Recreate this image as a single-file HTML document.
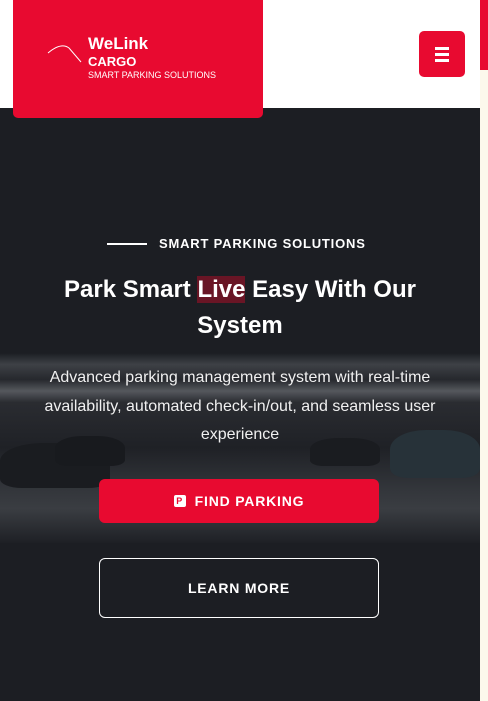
<!DOCTYPE html>
<html><head><meta charset="utf-8"><style>
*{margin:0;padding:0;box-sizing:border-box}
body{width:488px;height:701px;overflow:hidden;background:#fcf8ec;font-family:"Liberation Sans",sans-serif;position:relative}
.hero{position:absolute;left:0;top:108px;width:480px;height:593px;background:#1c1e23;overflow:hidden}
.img{position:absolute;left:0;top:245px;width:480px;height:190px;background:
linear-gradient(180deg,rgba(28,30,35,0) 0%,#3e4146 6%,#26282d 14%,#55585d 20%,#2a2c31 26%,#1f2126 50%,#33363b 72%,#3a3d42 82%,#1e2025 100%)}
.car{position:absolute;background:#111317;border-radius:40% 40% 20% 20%}
.header{position:absolute;left:0;top:0;width:480px;height:108px;background:#fff}
.strip{position:absolute;left:480px;top:0;width:8px;height:70px;background:#e80a30}
.logo{position:absolute;left:13px;top:0;width:250px;height:118px;background:#e80a30;border-radius:0 0 5px 5px;color:#fff}
.menu{position:absolute;left:419px;top:31px;width:46px;height:46px;background:#e80a30;border-radius:5px}
.menu i{position:absolute;left:16px;width:14px;height:3px;background:#fff}
.c{position:absolute;left:0;width:480px;text-align:center;color:#fff}
.btn{position:absolute;left:99px;width:280px;border-radius:6px;color:#fff;font-weight:bold;font-size:14px;letter-spacing:.8px;display:flex;align-items:center;justify-content:center}
</style></head><body>
<div class="strip"></div>
<div class="hero">
 <div class="img"></div>
 <div class="car" style="left:0;top:335px;width:110px;height:45px;background:#1a1c20"></div>
 <div class="car" style="left:55px;top:328px;width:70px;height:30px;background:#181a1e"></div>
 <div class="car" style="left:390px;top:322px;width:90px;height:48px;background:#273239"></div>
 <div class="car" style="left:310px;top:330px;width:70px;height:28px;background:#1a1c20"></div>
</div>
<div class="header"></div>
<div class="logo">
 <svg style="position:absolute;left:34px;top:44px" width="36" height="20"><path d="M1 9 Q14 -2 22 4 L34 18" stroke="#fff" stroke-width="1" fill="none"/></svg>
 <div style="position:absolute;left:75px;top:34px;font-size:17px;font-weight:bold">WeLink</div>
 <div style="position:absolute;left:75px;top:54px;font-size:13px;font-weight:bold">CARGO</div>
 <div style="position:absolute;left:75px;top:70px;font-size:9px">SMART PARKING SOLUTIONS</div>
</div>
<div class="menu"><i style="top:16px"></i><i style="top:22px"></i><i style="top:28px"></i></div>
<div style="position:absolute;left:107px;top:243px;width:40px;height:2px;background:#fff"></div>
<div style="position:absolute;left:159px;top:236px;color:#fff;font-size:13px;font-weight:bold;letter-spacing:.8px">SMART PARKING SOLUTIONS</div>
<div class="c" style="top:272px;font-size:24px;font-weight:bold;line-height:36px;padding:0 40px">Park Smart <span style="background:rgba(200,10,40,.45)">Live</span> Easy With Our System</div>
<div class="c" style="top:364px;font-size:16px;line-height:28.5px;padding:0 30px;color:#f0f0f0">Advanced parking management system with real-time availability, automated check-in/out, and seamless user experience</div>
<div class="btn" style="top:479px;height:44px;background:#e80a30"><span style="display:inline-block;width:12px;height:12px;background:#fff;border-radius:2px;margin-right:9px;color:#e80a30;font-size:9px;line-height:12px;text-align:center">P</span>FIND PARKING</div>
<div class="btn" style="top:558px;height:60px;border:1px solid #fff">LEARN MORE</div>
</body></html>
